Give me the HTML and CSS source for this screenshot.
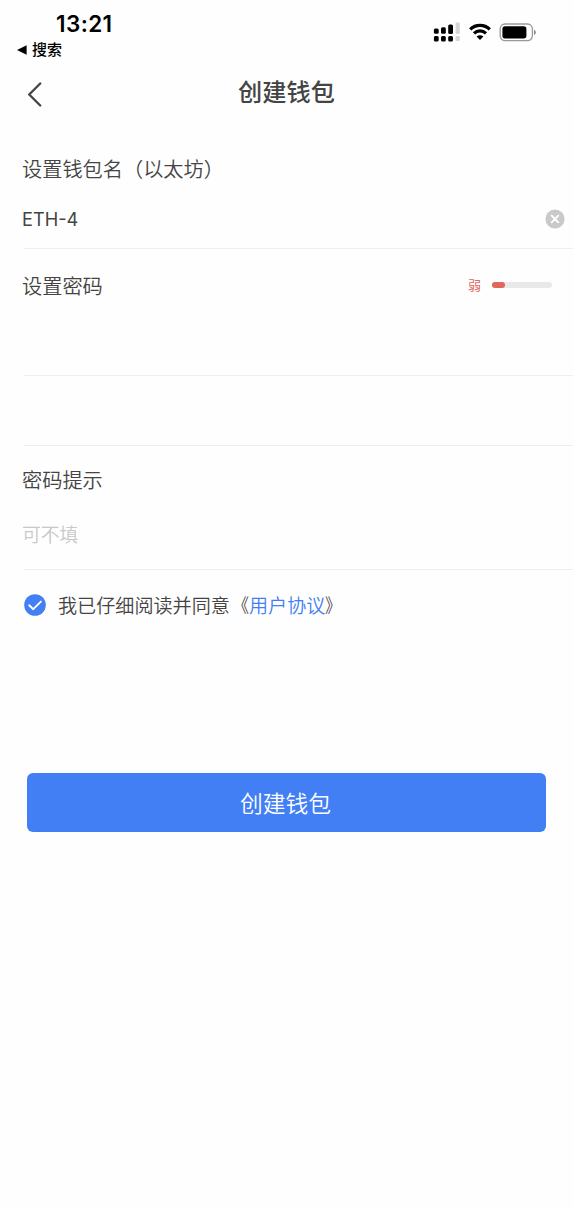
FILE: index.html
```
<!DOCTYPE html>
<html lang="zh-CN">
<head>
<meta charset="utf-8">
<title>创建钱包</title>
<link rel="stylesheet" href="styles.css">
</head>
<body>
<div class="status">
  <div class="status-left">
    <div class="time">13:21</div>
    <div class="back-app">
      <svg class="triangle" width="10" height="10" viewBox="0 0 10 10"><path d="M0 5 9.6 .3v9.4z" fill="#000"/></svg>
      <span>搜索</span>
    </div>
  </div>
  <div class="status-icons">
    <svg width="27" height="20" viewBox="0 0 27 20">
      <g fill="#000">
        <rect x="0.9" y="6.4" width="4.8" height="5.4" rx="1.5"/>
        <rect x="8" y="5.2" width="4.8" height="6.6" rx="1.5"/>
        <rect x="15.2" y="2.4" width="4.8" height="9.6" rx="1.5"/>
        <rect x="0.9" y="14" width="4.8" height="5.4" rx="1.5"/>
        <rect x="8" y="14" width="4.8" height="5.4" rx="1.5"/>
        <rect x="15.2" y="14" width="4.8" height="5.4" rx="1.5"/>
      </g>
      <g fill="#d6d6d6">
        <rect x="22.6" y="0.6" width="4.2" height="11.4" rx="1"/>
        <rect x="22.6" y="14" width="4.2" height="5" rx="1"/>
      </g>
    </svg>
    <svg class="wifi" width="22" height="18" viewBox="0 0 22 18">
      <g fill="none" stroke="#000" stroke-width="3.2">
        <path d="M1.2 6.4a14 14 0 0 1 19.6 0"/>
        <path d="M5 10.4a8.6 8.6 0 0 1 12 0"/>
      </g>
      <path d="M7.6 13.5a4.9 4.9 0 0 1 6.8 0L11 17z" fill="#000"/>
    </svg>
    <svg class="battery" width="38" height="20" viewBox="0 0 38 20">
      <rect x="1.2" y="2" width="32.2" height="16.6" rx="4.8" fill="#fff" stroke="#999" stroke-width="1.3"/>
      <rect x="3.4" y="4.2" width="24" height="12.2" rx="2.6" fill="#000"/>
      <path d="M35 7.8q1.8.8 1.8 2.6t-1.8 2.6z" fill="#888"/>
    </svg>
  </div>
</div>

<div class="nav">
  <svg class="nav-back" width="15" height="25" viewBox="0 0 15 25"><path d="M13.2 1.5 2.2 12.5l11 11" fill="none" stroke="#454545" stroke-width="2.4" stroke-linecap="round" stroke-linejoin="round"/></svg>
  <h1 class="title">创建钱包</h1>
</div>

<main class="form">
  <section class="group group-name">
    <div class="label">设置钱包名（以太坊）</div>
    <div class="field">
      <span class="value">ETH-4</span>
      <svg width="20" height="20" viewBox="0 0 20 20"><circle cx="10" cy="10" r="9.6" fill="#c9c9c9"/><path d="m6.7 6.7 6.6 6.6m0-6.6-6.6 6.6" stroke="#fff" stroke-width="1.9" stroke-linecap="round"/></svg>
    </div>
  </section>
  <section class="group group-password">
    <div class="label-row">
      <div class="label">设置密码</div>
      <div class="strength"><span class="strength-text">弱</span><span class="meter"><span class="meter-fill"></span></span></div>
    </div>
  </section>
  <section class="group group-confirm"></section>
  <section class="group group-hint">
    <div class="label">密码提示</div>
    <div class="placeholder">可不填</div>
  </section>
  <div class="agree">
    <svg width="22" height="22" viewBox="0 0 22 22"><circle cx="11" cy="11" r="10.8" fill="#427ff4"/><path d="m5.2 11.2 4.1 4 7.6-7.6" fill="none" stroke="#fff" stroke-width="1.9" stroke-linecap="round" stroke-linejoin="round"/></svg>
    <span class="agree-text">我已仔细阅读并同意<span class="mark mark-open">《</span><a class="link">用户协议</a><span class="mark mark-close">》</span></span>
  </div>
  <button class="submit">创建钱包</button>
</main>
</body>
</html>
```

FILE: styles.css
```
* { box-sizing: border-box; }
body {
  margin: 0;
  min-height: 1210px;
  background: #fefefe;
  color: #444;
  font-family: Inter, "Noto Sans CJK SC", sans-serif;
}
svg { display: block; flex: none; }

.status {
  display: flex;
  justify-content: space-between;
  height: 64px;
  padding: 10px 36px 0 16px;
  color: #000;
}
.time {
  padding-left: 40px;
  font-size: 22.5px;
  font-weight: 600;
  letter-spacing: 0.4px;
  line-height: 28px;
}
.back-app {
  display: flex;
  align-items: center;
  gap: 5px;
  font-size: 15px;
  font-weight: 500;
  line-height: 24px;
}
.triangle { margin-left: 1px; }
.status-icons {
  display: flex;
  align-items: center;
  height: 44px;
}
.wifi { margin-left: 9px; }
.battery { margin-left: 8px; }

.nav {
  display: grid;
  grid-template-columns: 60px 1fr 60px;
  align-items: center;
  height: 60px;
}
.nav-back { margin-left: 27px; }
.title {
  margin: 0;
  padding-bottom: 2px;
  font-size: 24.2px;
  font-weight: 500;
  line-height: 36px;
  text-align: center;
}

.form { padding-left: 22px; }
.group {
  margin-left: 2px;
  border-bottom: 1px solid #efefef;
}
.label, .value, .placeholder { margin-left: -2px; }
.label {
  font-size: 20.2px;
  font-weight: 350;
  line-height: 30px;
}
.group-name { height: 125px; padding-top: 31px; }
.field {
  display: flex;
  align-items: center;
  justify-content: space-between;
  margin-top: 19px;
  padding-right: 8px;
  line-height: 30px;
}
.value { font-size: 18.2px; }
.group-password { height: 127px; padding-top: 23px; }
.label-row {
  display: flex;
  align-items: center;
  justify-content: space-between;
  padding-right: 21px;
}
.strength {
  display: flex;
  align-items: center;
  gap: 11px;
  padding-bottom: 4px;
}
.strength-text { color: #e0675c; font-size: 13px; line-height: 20px; }
.meter {
  width: 60px;
  height: 6px;
  border-radius: 3px;
  background: #e8eaea;
}
.meter-fill {
  display: block;
  width: 13px;
  height: 6px;
  border-radius: 3px;
  background: #e0675c;
}
.group-confirm { height: 70px; }
.group-hint { height: 124px; padding-top: 20px; }
.placeholder {
  margin-top: 25px;
  color: #c8c8c8;
  font-size: 18.8px;
  font-weight: 350;
  line-height: 30px;
}
.agree {
  display: flex;
  align-items: center;
  gap: 12px;
  height: 70px;
  padding-left: 2px;
}
.agree-text {
  padding-top: 1px;
  font-size: 19.1px;
  font-weight: 350;
  line-height: 30px;
}
.mark { display: inline-block; }
.mark-open { transform: scaleX(0.85); transform-origin: right; }
.mark-close { transform: scaleX(0.85); transform-origin: left; }
.link { color: #427ff4; }
.submit {
  display: block;
  width: 519px;
  height: 59px;
  margin: 133px 0 0 5px;
  padding: 0 2px 0 0;
  border: 0;
  border-radius: 6px;
  background: #427ff4;
  color: #fff;
  font-family: inherit;
  font-size: 22.8px;
  font-weight: 350;
}
```
